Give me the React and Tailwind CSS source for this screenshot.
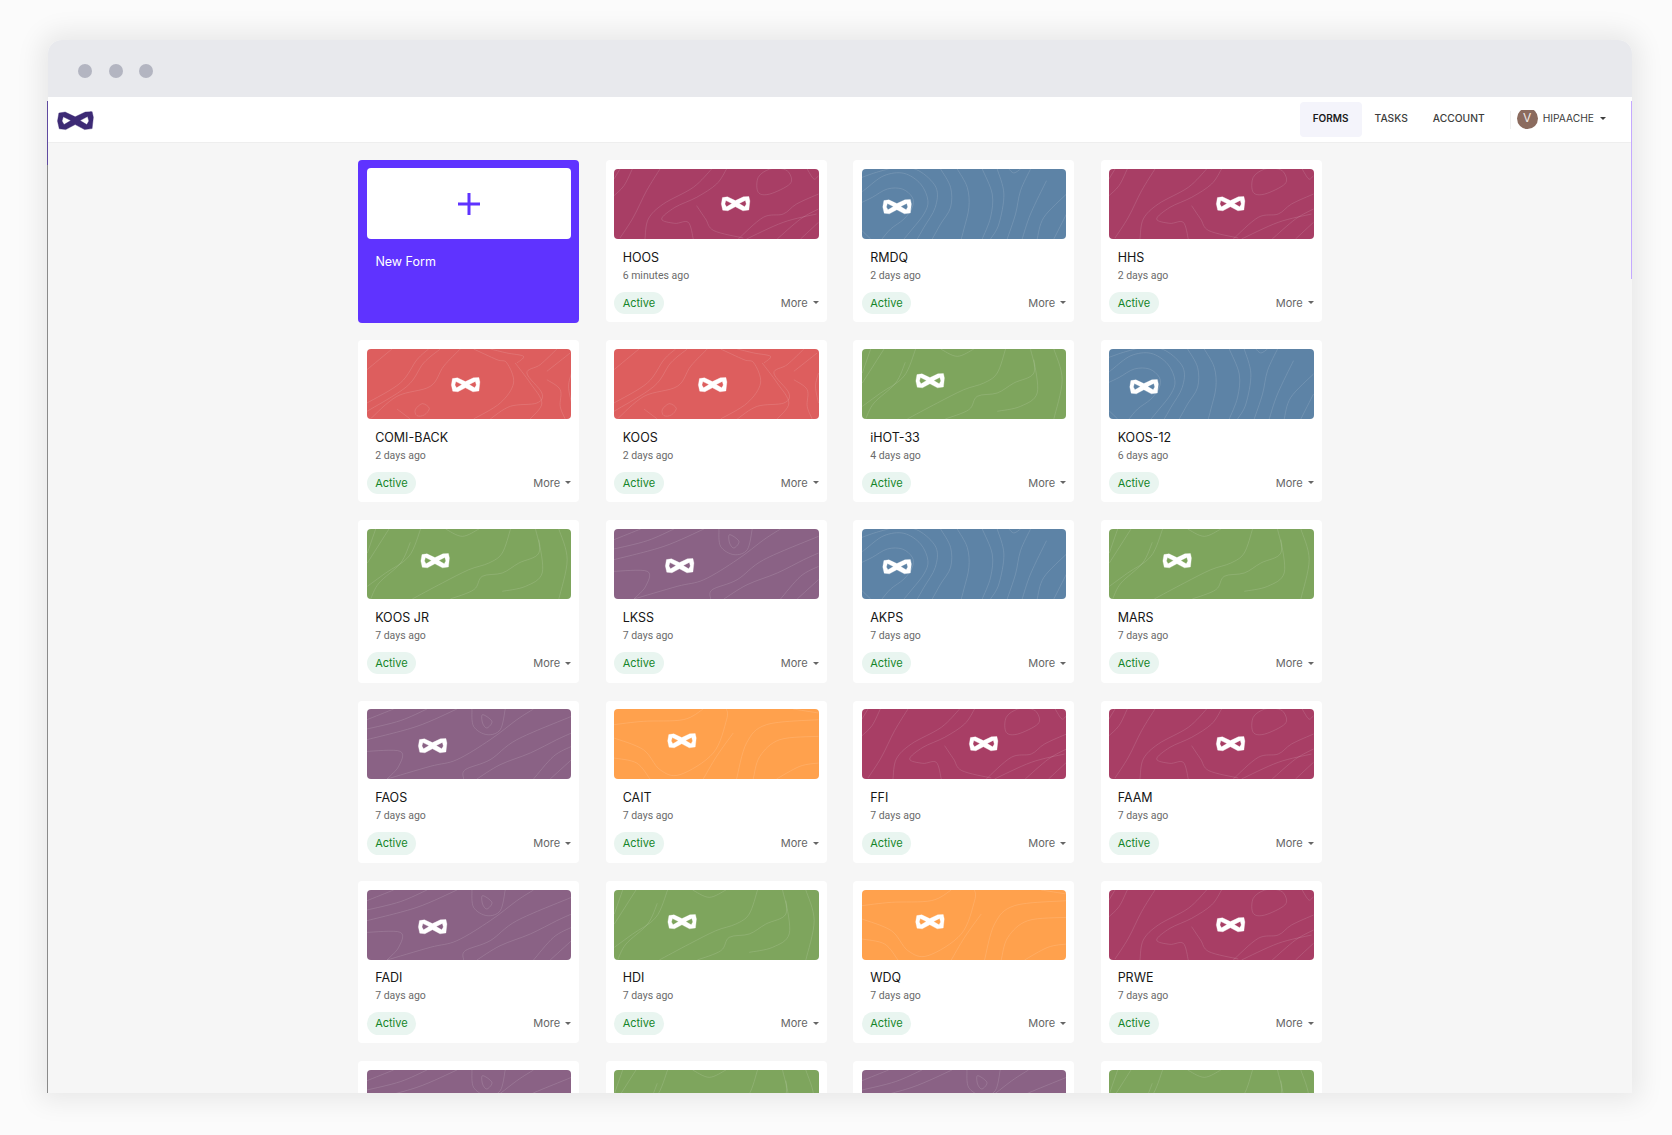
import React from "react";

const smooth = (p, closed) => {
  const n = p.length;
  const at = (i) => (closed ? p[(i + n) % n] : p[Math.max(0, Math.min(n - 1, i))]);
  let d = `M${p[0][0]},${p[0][1]}`;
  const last = closed ? n : n - 1;
  for (let i = 0; i < last; i++) {
    const a = at(i - 1), b = at(i), c = at(i + 1), e = at(i + 2);
    d += `C${b[0] + (c[0] - a[0]) / 6},${b[1] + (c[1] - a[1]) / 6} ${c[0] - (e[0] - b[0]) / 6},${c[1] - (e[1] - b[1]) / 6} ${c[0]},${c[1]}`;
  }
  return closed ? d + "Z" : d;
};

const MASK =
  "M1.5,1.6 L6.5,0.8 L14.5,4.6 L22.5,0.8 L28,0.5 L29,5 L28,14 L22,14.8 L14.5,10.8 L7,14.8 L1.8,14.2 L0.4,8Z M5,4.6 L4,8 L5.6,10.8 L11,7.6Z M24.4,4.4 L18.4,7.6 L23.8,10.8 L25.4,8Z";

const Mask = ({ className }) => (
  <svg viewBox="0 0 29.5 15.5" className={className} aria-hidden="true">
    <path d={MASK} fillRule="evenodd" fill="currentColor" stroke="currentColor" strokeWidth="0.3" strokeLinejoin="round" />
    <path d="M25.5,1.5 L27,0 M26.5,1 L27.6,-0.4" stroke="currentColor" strokeWidth="0.4" opacity="0.5" />
  </svg>
);

const PATTERNS = {
  rose: {
    bg: "#a83e65",
    logo: [107, 27],
    lines: [
      [[18, 207], [58, 145], [98, 65], [138, 0]],
      [[93, 210], [103, 150], [148, 105], [238, 55], [293, 0]],
      [[338, 0], [308, 45], [248, 85], [183, 115], [143, 150], [183, 163], [223, 160], [238, 210]],
      [[0, 80], [30, 50], [55, 0]],
      [[0, 30], [18, 0]],
      [[248, 110], [275, 150], [300, 185], [388, 207]],
      [[373, 210], [448, 145], [508, 135], [548, 105], [614, 75]],
      [[398, 210], [508, 160], [608, 135]],
      [[490, 210], [560, 150], [614, 120]],
      [[560, 210], [614, 160]],
      [[580, 0], [600, 30], [614, 20]],
    ],
    loops: [[[508, 0], [528, 15], [528, 45], [468, 75], [433, 70], [433, 25], [468, 0]]],
  },
  blue: {
    bg: "#5d83a6",
    logo: [20.4, 30],
    lines: [
      [[0, 70], [11, 60], [66, 20], [126, 13], [176, 45], [198, 95], [186, 135], [151, 180], [126, 210]],
      [[0, 25], [50, 8], [110, -5], [170, 5], [222, 55], [220, 115], [186, 175], [166, 210]],
      [[236, 0], [266, 55], [266, 115], [236, 165], [211, 210]],
      [[286, 0], [316, 55], [321, 115], [306, 180], [298, 210]],
      [[361, 0], [391, 75], [386, 145], [361, 210]],
      [[406, 0], [426, 75], [411, 165], [386, 210]],
      [[506, 0], [476, 65], [461, 135], [436, 210]],
      [[554, 35], [506, 135], [481, 210]],
      [[614, 75], [546, 145], [526, 210]],
      [[614, 135], [576, 210]],
      [[441, 0], [456, 12], [476, 0]],
      [[0, 185], [26, 210]],
      [[0, 100], [31, 85], [76, 60], [121, 60], [151, 85], [151, 115], [126, 150], [86, 180], [60, 210]],
    ],
    loops: [],
  },
  red: {
    bg: "#dd5e5e",
    logo: [84, 28],
    lines: [
      [[0, 62], [75, 0]],
      [[0, 162], [100, 102], [150, 32], [185, 0]],
      [[0, 187], [120, 112], [170, 42], [220, 0]],
      [[10, 210], [90, 142], [190, 112], [230, 52], [280, 0]],
      [[320, 0], [390, 32], [420, 42], [440, 102], [400, 162], [320, 210]],
      [[370, 210], [430, 172], [510, 162], [525, 132], [480, 72], [520, 47], [570, 0]],
      [[445, 42], [490, 102], [525, 162], [490, 210]],
      [[540, 92], [580, 122], [580, 172], [595, 210]],
      [[540, 67], [610, 12]],
      [[614, 72], [605, 112], [614, 162]],
      [[90, 180], [130, 210]],
      [[370, 0], [420, 12], [470, 22], [450, 42]],
    ],
    loops: [[[145, 182], [166, 164], [187, 178], [172, 198], [150, 200]]],
  },
  green: {
    bg: "#7ea55d",
    logo: [53.5, 24],
    lines: [
      [[1, 172], [56, 132], [126, 82], [161, 0]],
      [[136, 210], [226, 162], [306, 122], [366, 102], [406, 72], [431, 0]],
      [[250, 210], [321, 182], [346, 142], [406, 132], [456, 102], [516, 72], [506, 0]],
      [[576, 0], [601, 92], [576, 210]],
      [[406, 187], [476, 172], [526, 132], [516, 32]],
      [[236, 0], [286, 22], [336, 0]],
      [[1, 102], [66, 0]],
      [[1, 72], [26, 0]],
      [[11, 210], [36, 162], [101, 102], [130, 40]],
    ],
    loops: [],
  },
  purple: {
    bg: "#8a6285",
    logo: [51, 29],
    lines: [
      [[0, 32], [80, 0]],
      [[0, 92], [150, 52], [270, 0]],
      [[315, 0], [320, 52], [360, 77], [400, 62], [415, 0]],
      [[0, 127], [100, 127], [95, 172], [60, 210]],
      [[60, 210], [190, 172], [270, 152], [370, 92], [450, 32], [500, 0]],
      [[290, 210], [295, 182], [370, 152], [450, 92], [614, 22]],
      [[330, 210], [400, 167], [490, 132], [570, 92], [614, 72]],
      [[500, 210], [560, 142], [614, 112]],
      [[550, 210], [614, 152]],
      [[0, 60], [100, 35], [180, 0]],
    ],
    loops: [[[347, 17], [375, 37], [360, 57], [347, 42]]],
  },
  orange: {
    bg: "#ffa14d",
    logo: [53.3, 24],
    lines: [
      [[0, 47], [88, 37], [208, 32], [268, 0]],
      [[0, 87], [88, 122], [138, 182], [198, 197], [298, 132], [338, 32], [338, 0]],
      [[0, 147], [68, 162], [108, 210]],
      [[368, 210], [398, 102], [458, 47], [614, 32]],
      [[418, 210], [438, 142], [498, 92], [614, 82]],
      [[488, 210], [558, 172], [614, 162]],
      [[538, 0], [614, 12]],
      [[268, 210], [308, 142], [358, 72]],
    ],
    loops: [],
  },
};

const Cover = ({ kind }) => {
  const p = PATTERNS[kind];
  return (
    <div className="h-[70px] shrink-0 overflow-hidden rounded-[4px]" style={{ backgroundColor: p.bg }}>
      <svg viewBox="0 0 614 210" preserveAspectRatio="none" className="block h-full w-full" aria-hidden="true">
        <g fill="none" stroke="#fff" strokeOpacity="0.15" strokeWidth="2.6">
          {p.lines.map((l, i) => (
            <path key={i} d={smooth(l)} />
          ))}
          {p.loops.map((l, i) => (
            <path key={i} d={smooth(l, true)} />
          ))}
        </g>
        <g transform={`translate(${p.logo[0] * 3} ${p.logo[1] * 3}) scale(3)`}>
          <path d={MASK} fillRule="evenodd" fill="#fff" stroke="#fff" strokeWidth="0.3" strokeLinejoin="round" />
        </g>
      </svg>
    </div>
  );
};

const Caret = ({ className = "" }) => (
  <span className={`inline-block h-0 w-0 border-x-[3px] border-t-[3px] border-x-transparent ${className}`} />
);

const Card = ({ name, time, kind }) => (
  <div className="flex flex-col rounded-[4px] bg-white px-[8.25px] pt-[8.75px]">
    <Cover kind={kind} />
    {name && (
      <>
        <div className="mt-[10.75px] px-[8.5px] text-[12.5px] leading-[16px] text-[#161616]">{name}</div>
        <div className="mt-[2px] px-[8.5px] font-[Roboto,sans-serif] text-[10.5px] leading-[15px] text-[#6a6a6a]">{time}</div>
        <div className="mt-[9px] flex items-center justify-between">
          <span className="flex h-[22.5px] w-[49.5px] items-center justify-center rounded-full bg-[#e9f5f0] text-[11px] text-[#148529]">
            Active
          </span>
          <span className="flex items-center gap-[5px] text-[11px] text-[#666666]">
            More
            <Caret className="border-t-[#666666]" />
          </span>
        </div>
      </>
    )}
  </div>
);

const FORMS = [
  ["HOOS", "6 minutes ago", "rose"],
  ["RMDQ", "2 days ago", "blue"],
  ["HHS", "2 days ago", "rose"],
  ["COMI-BACK", "2 days ago", "red"],
  ["KOOS", "2 days ago", "red"],
  ["iHOT-33", "4 days ago", "green"],
  ["KOOS-12", "6 days ago", "blue"],
  ["KOOS JR", "7 days ago", "green"],
  ["LKSS", "7 days ago", "purple"],
  ["AKPS", "7 days ago", "blue"],
  ["MARS", "7 days ago", "green"],
  ["FAOS", "7 days ago", "purple"],
  ["CAIT", "7 days ago", "orange"],
  ["FFI", "7 days ago", "rose"],
  ["FAAM", "7 days ago", "rose"],
  ["FADI", "7 days ago", "purple"],
  ["HDI", "7 days ago", "green"],
  ["WDQ", "7 days ago", "orange"],
  ["PRWE", "7 days ago", "rose"],
  [null, null, "purple"],
  [null, null, "green"],
  [null, null, "purple"],
  [null, null, "green"],
];

export default function App() {
  return (
    <div className="h-[1135px] overflow-hidden bg-[#fbfbfb] px-[48px] pt-[40px] font-[Inter,sans-serif]">
      <div className="relative h-[1053px] w-[1584px] rounded-t-[14px] shadow-[0_0_26px_8px_rgba(0,0,0,0.08)]">
        <div className="flex h-full flex-col overflow-hidden rounded-t-[14px] bg-[#f6f6f6]">
          <div className="flex h-[57px] shrink-0 items-center gap-[16.5px] bg-[#e8e9ed] pt-[5px] pl-[30px]">
            <span className="h-[14px] w-[14px] rounded-full bg-[#b3b5c1]" />
            <span className="h-[14px] w-[14px] rounded-full bg-[#b3b5c1]" />
            <span className="h-[14px] w-[14px] rounded-full bg-[#b3b5c1]" />
          </div>
          <nav className="flex h-[46px] shrink-0 items-center justify-between border-b border-[#eeeeee] bg-white pl-[9px] pr-[26px]">
            <Mask className="mt-[3px] h-[19.5px] w-[37px] text-[#3d2a75]" />
            <div className="flex items-center text-[10.25px] font-medium text-[#3c3c3c]">
              <span className="flex h-[35px] w-[62px] items-center justify-center rounded-[4px] bg-[#f4f4fb] pb-[3px] text-[10px] font-semibold text-[#1b1b1b]">
                FORMS
              </span>
              <span className="ml-[13px] pb-[2px]">TASKS</span>
              <span className="ml-[25px] pb-[2px]">ACCOUNT</span>
              <span className="ml-[25px] h-[18px] w-px bg-[#f0f0f0]" />
              <span className="ml-[6px] flex h-[19px] w-[21px] items-end justify-center overflow-hidden">
                <span className="flex h-[21px] w-[21px] shrink-0 items-center justify-center rounded-full bg-[#8b6b5e] pb-[2px] text-[12px] font-normal text-[#f1e9e5]">
                  V
                </span>
              </span>
              <span className="ml-[5px] pb-[2px] text-[10.25px] font-normal">HIPAACHE</span>
              <Caret className="ml-[6px] mb-[3px] border-t-[#3c3c3c]" />
            </div>
          </nav>
          <main className="min-h-0 flex-1 overflow-hidden pl-[310.4px] pt-[17px]">
            <div className="grid grid-cols-[repeat(4,221px)] auto-rows-[162.2px] gap-x-[26.5px] gap-y-[18px]">
              <div className="-mb-px -mt-[0.5px] flex flex-col rounded-[4px] bg-[#5f33ff] p-[8.5px]">
                <div className="flex h-[71px] shrink-0 items-center justify-center rounded-[4px] bg-white">
                  <svg viewBox="0 0 22 22" className="mt-[1px] h-[22px] w-[22px]" aria-hidden="true">
                    <path d="M11 0V22M0 11H22" stroke="#5f33ff" strokeWidth="3" />
                  </svg>
                </div>
                <div className="mt-[15px] px-[8.5px] text-[12.5px] leading-[16px] text-white">New Form</div>
              </div>
              {FORMS.map(([name, time, kind], i) => (
                <Card key={i} name={name} time={time} kind={kind} />
              ))}
            </div>
          </main>
        </div>
        <span className="absolute bottom-0 left-[-1px] top-[61px] w-px bg-[#8a8a8a]" />
        <span className="absolute left-[-1px] top-[61px] h-[64px] w-px bg-[#5f4aa0]" />
        <span className="absolute right-0 top-[61px] h-[178px] w-px bg-[#c4a9ff]" />
      </div>
    </div>
  );
}
